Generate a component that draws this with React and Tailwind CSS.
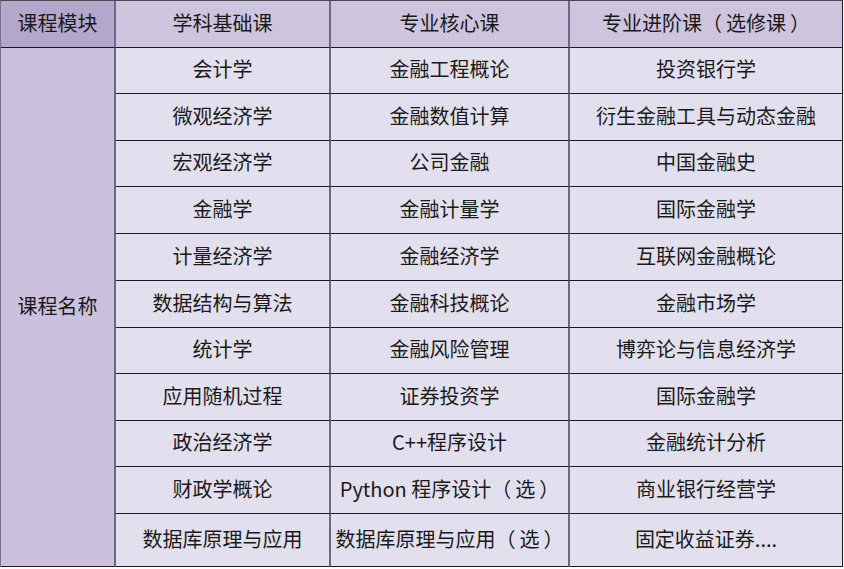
import React from "react";

const rows = [
  ["会计学", "金融工程概论", "投资银行学"],
  ["微观经济学", "金融数值计算", "衍生金融工具与动态金融"],
  ["宏观经济学", "公司金融", "中国金融史"],
  ["金融学", "金融计量学", "国际金融学"],
  ["计量经济学", "金融经济学", "互联网金融概论"],
  ["数据结构与算法", "金融科技概论", "金融市场学"],
  ["统计学", "金融风险管理", "博弈论与信息经济学"],
  ["应用随机过程", "证券投资学", "国际金融学"],
  ["政治经济学", "C++程序设计", "金融统计分析"],
  ["财政学概论", "Python 程序设计（选）", "商业银行经营学"],
  ["数据库原理与应用", "数据库原理与应用（选）", "固定收益证券...."],
];

function T({ s }) {
  const parts = s.split(/([（）])/);
  return (
    <span>
      {parts.map((p, i) =>
        p === "（" ? (
          <span key={i} className="inline-block mr-[4px]">（</span>
        ) : p === "）" ? (
          <span key={i} className="inline-block ml-[4px]">）</span>
        ) : (
          <React.Fragment key={i}>{p}</React.Fragment>
        )
      )}
    </span>
  );
}

export default function App() {
  const cell =
    "flex items-center justify-center pb-[3px] border-b border-b-[#1c1a22] border-r-2 border-r-[#6e6882] whitespace-nowrap";
  const last =
    "flex items-center justify-center pb-[3px] border-b border-b-[#1c1a22] border-r border-r-[#1c1a22] whitespace-nowrap";
  return (
    <div className="bg-white w-[844px] h-[569px]">
      <div
        className="w-[843px] border-l border-l-[#7a7390] border-t border-t-[#4a4652] grid grid-cols-[115px_215px_239px_273px] grid-rows-[47px_46px_47px_46px_47px_47px_47px_46px_47px_46px_47px_53px] text-[20px] text-[#1a1a1a]"
        style={{ fontFamily: '"Noto Sans CJK SC", "Noto Sans", sans-serif' }}
      >
        <div className={`${cell} bg-[#b3a7cb]`}>课程模块</div>
        <div className={`${cell} bg-[#cdc4de]`}>学科基础课</div>
        <div className={`${cell} bg-[#cdc4de]`}>专业核心课</div>
        <div className={`${last} bg-[#cdc4de]`}>
          <T s="专业进阶课（选修课）" />
        </div>
        <div className={`${cell} bg-[#cbc1dc] col-start-1 row-start-2 row-span-11`}>
          课程名称
        </div>
        {rows.map((r, i) => (
          <React.Fragment key={i}>
            <div className={`${cell} bg-[#e2e0ee]`}><T s={r[0]} /></div>
            <div className={`${cell} bg-[#e2e0ee]`}><T s={r[1]} /></div>
            <div className={`${last} bg-[#e2e0ee]`}><T s={r[2]} /></div>
          </React.Fragment>
        ))}
      </div>
    </div>
  );
}
